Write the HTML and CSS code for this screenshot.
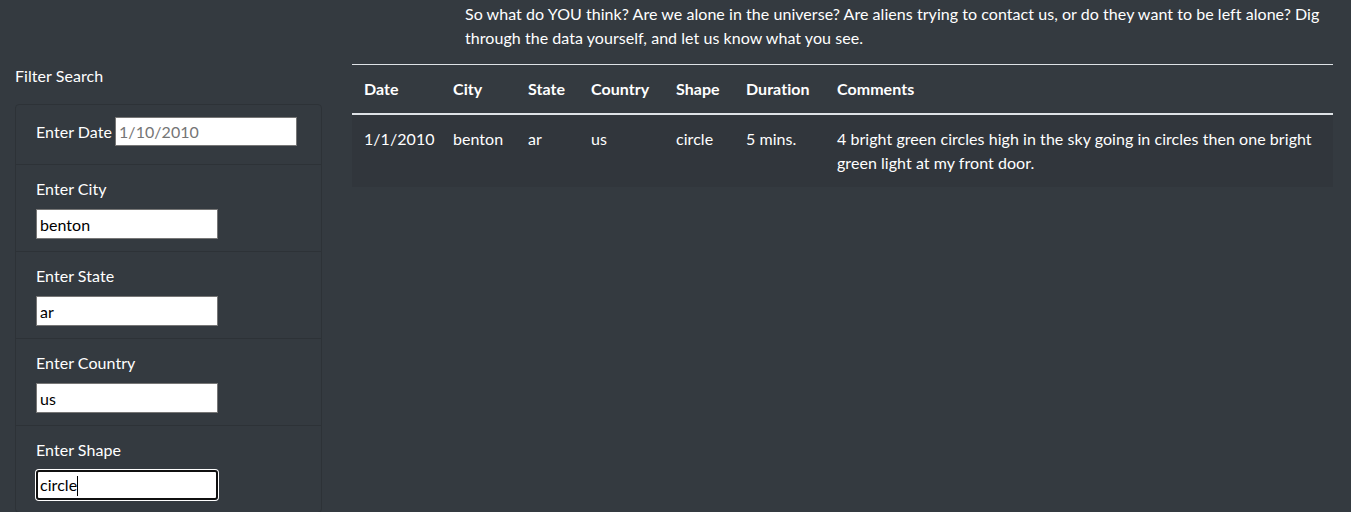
FILE: index.html
```html
<!DOCTYPE html>
<html lang="en">
<head>
<meta charset="utf-8">
<title>UFO Sightings</title>
<link rel="stylesheet" href="styles.css">
</head>
<body>
<div class="page">
  <aside class="sidebar">
    <div class="sidebar-title">Filter Search</div>
    <form class="filters">
      <ul class="list-group">
        <li class="list-item list-item-inline">
          <label class="lbl" for="datetime">Enter Date</label>
          <input class="field" id="datetime" type="text" placeholder="1/10/2010">
        </li>
        <li class="list-item">
          <label class="lbl" for="city">Enter City</label>
          <input class="field" id="city" type="text" value="benton">
        </li>
        <li class="list-item">
          <label class="lbl" for="state">Enter State</label>
          <input class="field" id="state" type="text" value="ar">
        </li>
        <li class="list-item">
          <label class="lbl" for="country">Enter Country</label>
          <input class="field" id="country" type="text" value="us">
        </li>
        <li class="list-item">
          <label class="lbl" for="shape">Enter Shape</label>
          <div class="field field-focus" id="shape" role="textbox">circle<span class="caret"></span></div>
        </li>
      </ul>
    </form>
  </aside>
  <main class="content">
    <p class="intro">So what do YOU think? Are we alone in the universe? Are aliens trying to contact us, or do they want to be left alone? Dig through the data yourself, and let us know what you see.</p>
    <table class="ufo-table">
      <colgroup>
        <col class="c-date"><col class="c-city"><col class="c-state"><col class="c-country"><col class="c-shape"><col class="c-duration"><col class="c-comments">
      </colgroup>
      <thead>
        <tr>
          <th>Date</th><th>City</th><th>State</th><th>Country</th><th>Shape</th><th>Duration</th><th>Comments</th>
        </tr>
      </thead>
      <tbody>
        <tr class="odd">
          <td>1/1/2010</td><td>benton</td><td>ar</td><td>us</td><td>circle</td><td>5 mins.</td><td>4 bright green circles high in the sky going in circles then one bright green light at my front door.</td>
        </tr>
      </tbody>
    </table>
  </main>
</div>
</body>
</html>
```
FILE: styles.css
```css
* { box-sizing: border-box; }
html, body { margin: 0; }
body {
  background: #343a40;
  color: #fff;
  font-family: Lato, "Liberation Sans", sans-serif;
  font-size: 16px;
  line-height: 24px;
  letter-spacing: 0.05px;
  overflow: hidden;
  height: 512px;
}
.page {
  display: flex;
  width: 1348px;
}
.sidebar {
  width: 337px;
  flex: none;
  padding: 64px 15px 0 15px;
}
.sidebar-title {
  font-size: 16px;
  line-height: 24px;
  margin-bottom: 16px;
}
.filters { margin: 0; }
.list-group {
  list-style: none;
  margin: 0;
  padding: 0;
  border: 1px solid #2d3237;
  border-radius: 4px;
}
.list-item {
  padding: 12px 20px;
  border-top: 1px solid #2d3237;
}
.list-item:first-child { border-top: none; }
.lbl {
  display: inline-block;
  margin-bottom: 8px;
}
.field {
  display: block;
  width: 182px;
  height: 30px;
  border: 1px solid #767676;
  background: #fff;
  color: #000;
  font-family: inherit;
  font-size: 16px;
  letter-spacing: 0.05px;
  padding: 1px 3px;
  margin: 0;
  border-radius: 0;
  line-height: 26px;
}
.list-item-inline {
  display: flex;
  align-items: center;
  gap: 3px;
  padding-bottom: 18px;
}
.list-item-inline .lbl { margin-bottom: 0; }
.list-item-inline .field { height: 29px; }
.field::placeholder { color: #757575; opacity: 1; }
.field-focus {
  border-radius: 3px;
  border: 2px solid #101010;
  box-shadow: 0 0 0 1px #fff;
  padding: 0 2px;
  line-height: 26px;
  white-space: nowrap;
}
.caret {
  display: inline-block;
  width: 1px;
  height: 20px;
  background: #000;
  vertical-align: -5px;
}
.content {
  flex: 1;
  padding: 2px 15px 0 15px;
  min-width: 0;
}
.intro {
  margin: 0 0 14px 113px;
  width: 868px;
}
.ufo-table {
  width: 981px;
  border-collapse: collapse;
  table-layout: fixed;
}
.c-date { width: 89px; }
.c-city { width: 75px; }
.c-state { width: 63px; }
.c-country { width: 85px; }
.c-shape { width: 70px; }
.c-duration { width: 91px; }
.ufo-table th {
  text-align: left;
  font-weight: 700;
  padding: 12px;
  border-top: 1px solid #dee2e6;
  border-bottom: 2px solid #dee2e6;
  vertical-align: bottom;
  white-space: nowrap;
}
.ufo-table td {
  padding: 12px;
  vertical-align: top;
}
.ufo-table tr.odd { background: #31363c; }
```
